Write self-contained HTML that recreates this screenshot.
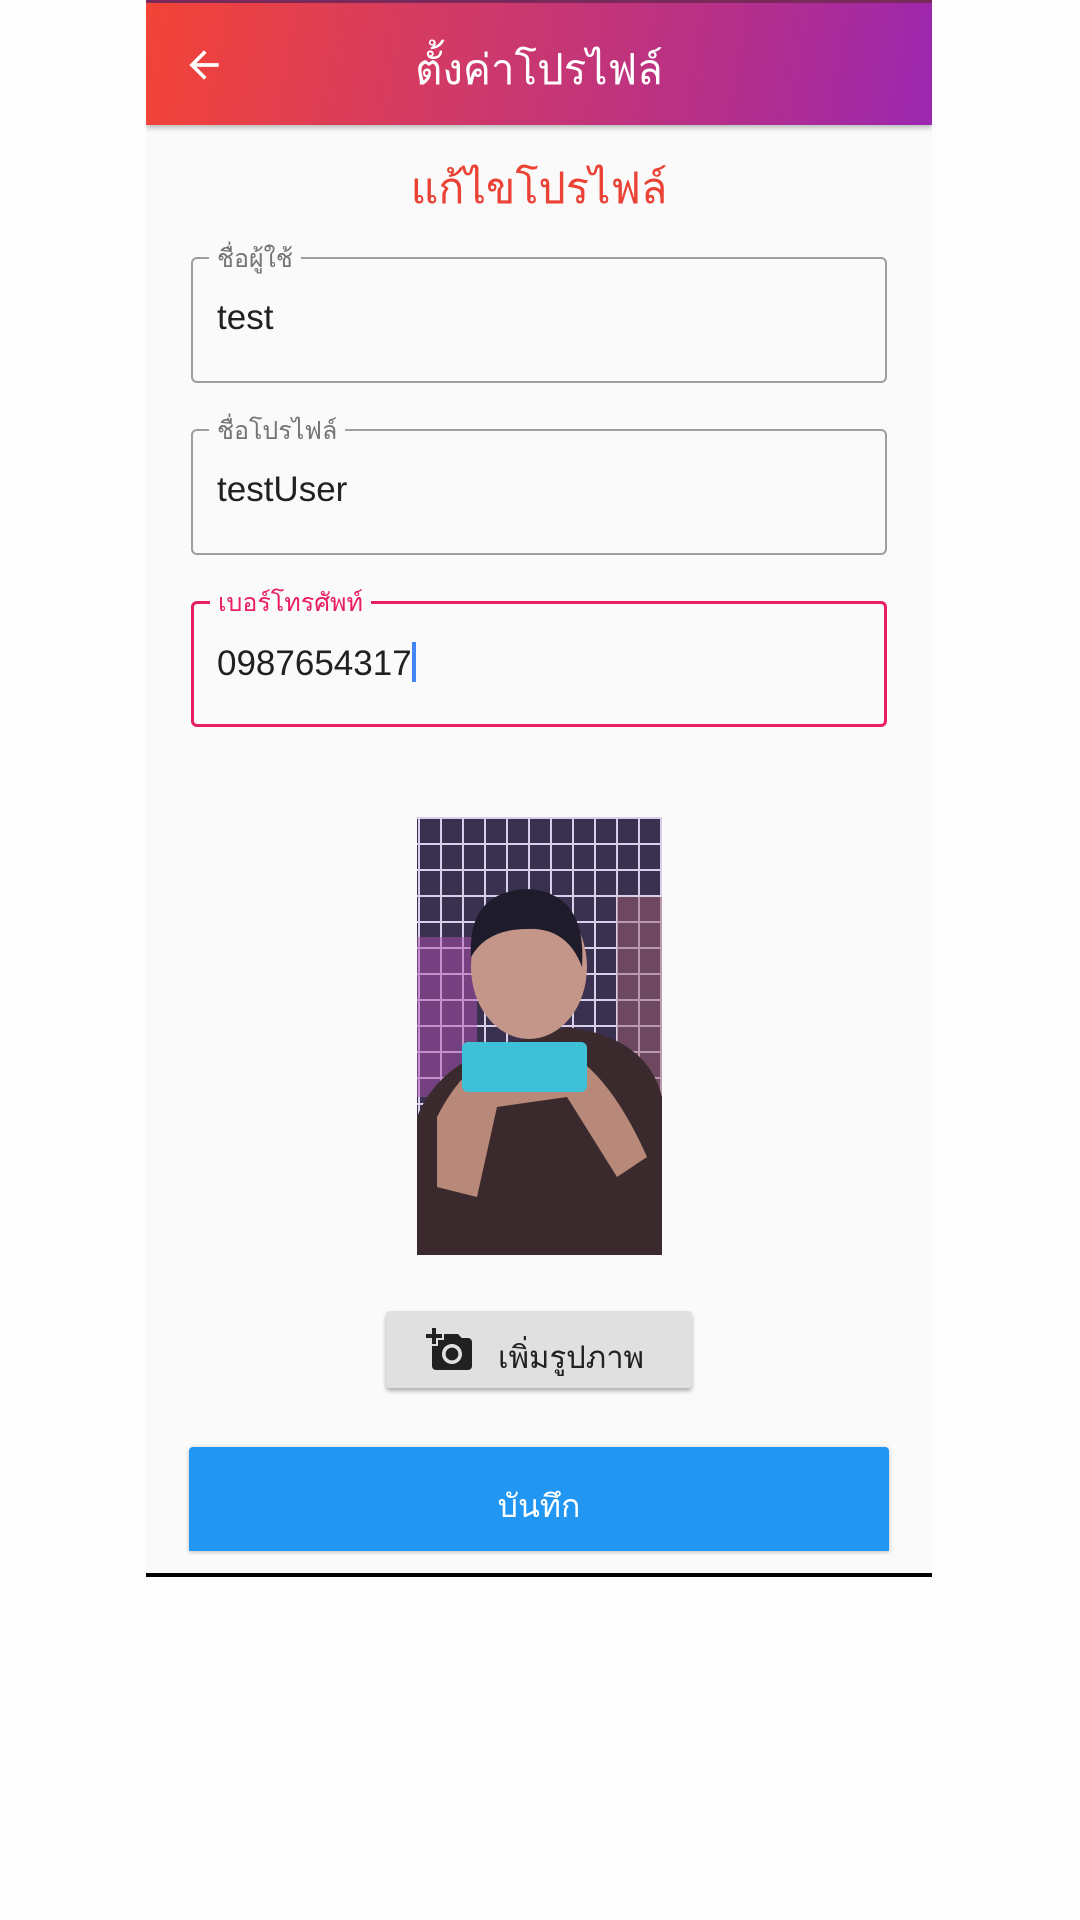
<!DOCTYPE html>
<html><head><meta charset="utf-8"><style>
body{margin:0;width:1080px;height:1920px;background:#fdfdfd;position:relative;overflow:hidden;font-family:"Liberation Sans","Noto Sans CJK SC",sans-serif}
.ph{position:absolute;left:146px;top:0;width:786px;height:1573px;background:#fafafa;overflow:hidden}
.bar{position:absolute;left:0;top:0;width:786px;height:125px;background:linear-gradient(100deg,#f44336,#d03a68 40%,#b42f8c 75%,#9c27b0);box-shadow:0 3px 5px rgba(0,0,0,.25);border-top:3px solid #7a2a5a;box-sizing:border-box}
.t{position:absolute;color:#fff;font-size:42px;left:0;width:786px;text-align:center;top:34px}
.h{position:absolute;left:0;width:786px;text-align:center;top:154px;color:#ea4335;font-size:43px}
.f{position:absolute;left:45px;width:696px;height:126px;border:2px solid #9e9e9e;border-radius:6px;box-sizing:border-box}
.f .l{position:absolute;left:16px;top:-20px;background:#fafafa;padding:0 8px;font-size:25px;color:#757575}
.f .v{position:absolute;left:24px;top:39px;font-size:35px;color:#212121}
.sel{border:3px solid #e91e63}
.sel .l{color:#e91e63;top:-21px}
.btn{position:absolute;left:240px;top:1311px;width:306px;height:77px;background:#e0e0e0;border-radius:4px;box-shadow:0 3px 4px rgba(0,0,0,.3)}
.save{position:absolute;left:43px;top:1447px;width:700px;height:104px;background:#2196f3;border-radius:4px 4px 0 0;box-shadow:0 1px 4px rgba(0,0,0,.25);color:#fff;font-size:32px;text-align:center;line-height:118px}
</style></head><body>
<div class="ph">
<div class="bar">
<svg style="position:absolute;left:36px;top:40px" width="44" height="44" viewBox="0 0 24 24"><path d="M20 11H7.83l5.59-5.59L12 4l-8 8 8 8 1.41-1.41L7.83 13H20v-2z" fill="#fff"/></svg>
<div class="t">ตั้งค่าโปรไฟล์</div></div>
<div class="h">แก้ไขโปรไฟล์</div>
<div class="f" style="top:257px"><span class="l">ชื่อผู้ใช้</span><span class="v">test</span></div>
<div class="f" style="top:429px"><span class="l">ชื่อโปรไฟล์</span><span class="v">testUser</span></div>
<div class="f sel" style="top:601px"><span class="l">เบอร์โทรศัพท์</span><span class="v" style="left:23px;top:38px">0987654317<span style="display:inline-block;width:4px;height:40px;background:#4285f4;vertical-align:-7px"></span></span></div>
<svg style="position:absolute;left:271px;top:817px" width="245" height="438" viewBox="0 0 245 438">
<defs><pattern id="g" width="22" height="26" patternUnits="userSpaceOnUse"><rect width="22" height="26" fill="#3a3050"/><path d="M0 1H22M2 0V26" stroke="#d8d0e8" stroke-width="2"/></pattern></defs>
<rect width="245" height="438" fill="url(#g)"/>
<rect x="0" y="120" width="60" height="160" fill="#b050b0" opacity=".5"/>
<rect x="200" y="80" width="45" height="250" fill="#a06070" opacity=".5"/>
<path d="M0 438V300Q20 250 80 230L150 210Q230 220 245 280V438Z" fill="#3a2a2e"/>
<ellipse cx="112" cy="150" rx="58" ry="72" fill="#c4968a"/>
<path d="M54 140Q50 75 110 72Q170 75 165 150Q150 110 110 112Q70 112 54 140Z" fill="#1e1c2a"/>
<path d="M20 300Q40 260 70 240L140 230Q190 250 230 340L200 360 150 280 80 290 60 380 20 370Z" fill="#b88878"/>
<rect x="45" y="225" width="125" height="50" rx="6" fill="#3ec0d8"/>
</svg>
<div class="btn">
<svg style="position:absolute;left:40px;top:15px" width="48" height="48" viewBox="0 0 24 24"><path d="M3 4V1h2v3h3v2H5v3H3V6H0V4h3zm3 6V7h3V4h7l1.83 2H21c1.1 0 2 .9 2 2v12c0 1.1-.9 2-2 2H5c-1.1 0-2-.9-2-2V10h3zm7 9c2.760 0 5-2.24 5-5s-2.24-5-5-5-5 2.24-5 5 2.24 5 5 5zm-3.2-5c0 1.77 1.43 3.2 3.2 3.2s3.2-1.43 3.2-3.2-1.43-3.2-3.2-3.2-3.2 1.430-3.2 3.2z" fill="#212121"/></svg>
<span style="position:absolute;left:112px;top:21px;font-size:31px;color:#212121">เพิ่มรูปภาพ</span></div>
<div class="save">บันทึก</div>
</div>
<div style="position:absolute;left:146px;top:1573px;width:786px;height:4px;background:#000"></div>
</body></html>
